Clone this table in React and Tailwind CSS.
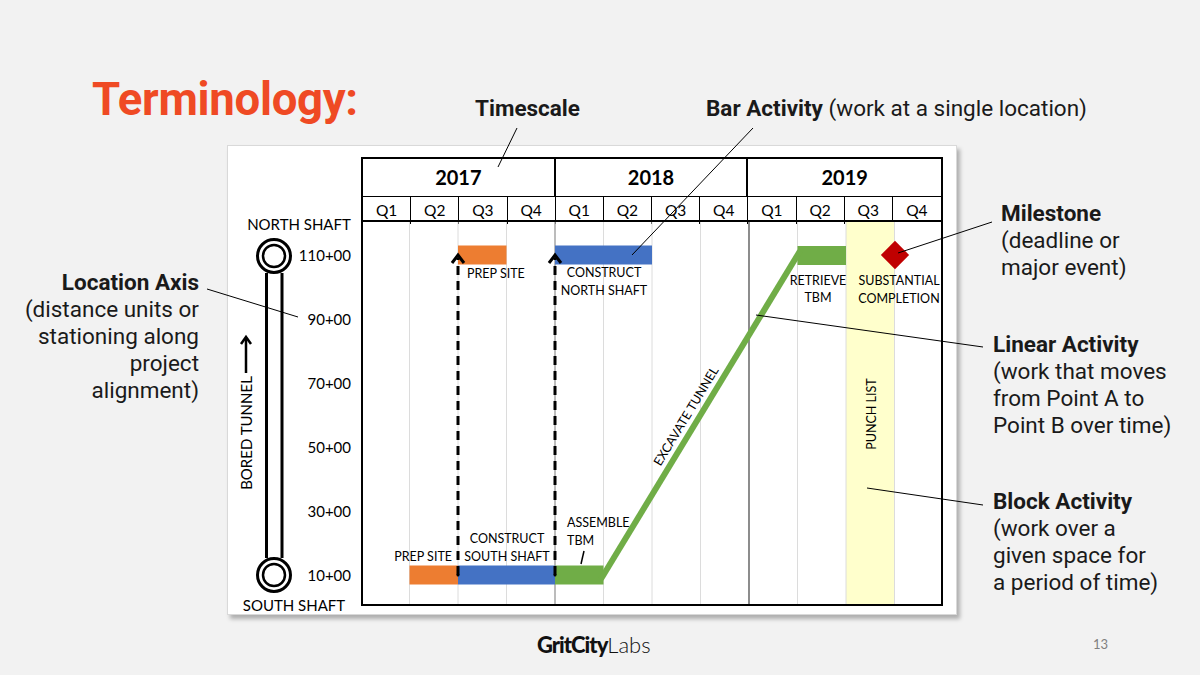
import React from "react"

const Q = 48.5

const years = ["2017", "2018", "2019"]
const quarters = ["Q1", "Q2", "Q3", "Q4", "Q1", "Q2", "Q3", "Q4", "Q1", "Q2", "Q3", "Q4"]
const stations = ["110+00", "90+00", "70+00", "50+00", "30+00", "10+00"]

function LocationAxis() {
  return (
    <svg width="134" height="470" viewBox="0 0 134 470" className="block" fontFamily="Lato, sans-serif">
      {/* shafts + tunnel */}
      <line x1="38.5" y1="127" x2="38.5" y2="412" stroke="#000" strokeWidth="3" />
      <line x1="54" y1="127" x2="54" y2="412" stroke="#000" strokeWidth="3" />
      <circle cx="46" cy="110" r="16.5" fill="#fff" stroke="#000" strokeWidth="3" />
      <circle cx="46" cy="110" r="11" fill="none" stroke="#000" strokeWidth="2.5" />
      <circle cx="46" cy="429" r="16.5" fill="#fff" stroke="#000" strokeWidth="3" />
      <circle cx="46" cy="429" r="11" fill="none" stroke="#000" strokeWidth="2.5" />

      <text x="71" y="78" fontSize="15" textAnchor="middle" dominantBaseline="central">NORTH SHAFT</text>
      <text x="66" y="459" fontSize="15" textAnchor="middle" dominantBaseline="central">SOUTH SHAFT</text>

      {stations.map((s, i) => (
        <text key={s} x="123" y={109 + i * 64} fontSize="15" textAnchor="end" dominantBaseline="central">
          {s}
        </text>
      ))}

      {/* direction arrow */}
      <line x1="18" y1="227" x2="18" y2="192" stroke="#000" strokeWidth="2.5" />
      <polyline points="13,198 18,191 23,198" fill="none" stroke="#000" strokeWidth="2.5" />
      <text
        x="18"
        y="287"
        fontSize="15"
        textAnchor="middle"
        dominantBaseline="central"
        transform="rotate(-90 18 287)"
      >
        BORED TUNNEL
      </text>
    </svg>
  )
}

function DashedArrow({ x }) {
  return (
    <g>
      <line x1={x} y1="353" x2={x} y2="36" stroke="#000" strokeWidth="3" strokeDasharray="9 6" />
      <polyline points={`${x - 6},41 ${x},33 ${x + 6},41`} fill="none" stroke="#000" strokeWidth="3" />
      <circle cx={x} cy="353" r="1.5" fill="#000" />
    </g>
  )
}

function ChartBody() {
  return (
    <svg width="582" height="384" viewBox="0 0 582 384" className="block" fontFamily="Lato, sans-serif" fontSize="12.5">
      {/* block activity */}
      <rect x="485" y="0" width="48.5" height="384" fill="#ffffcc" />

      {[1, 2, 3, 5, 6, 7, 9, 10, 11].map((k) => (
        <line key={k} x1={k * Q} y1="0" x2={k * Q} y2="384" stroke="#dcdcdc" strokeWidth="1" />
      ))}
      <line x1="194" y1="0" x2="194" y2="384" stroke="#a6a6a6" strokeWidth="1.5" />
      <line x1="388" y1="0" x2="388" y2="384" stroke="#404040" strokeWidth="1.2" />
      <polyline points="1,0 1,383 581,383 581,0" fill="none" stroke="#000" strokeWidth="2" />

      {/* bars */}
      <rect x="97" y="23.5" width="48.5" height="19" fill="#ed7d31" />
      <rect x="194" y="23.5" width="97" height="19" fill="#4472c4" />
      <rect x="48.5" y="343.5" width="48.5" height="19" fill="#ed7d31" />
      <rect x="97" y="343.5" width="97" height="19" fill="#4472c4" />
      <rect x="194" y="343.5" width="48.5" height="19" fill="#70ad47" />
      <rect x="436.5" y="24" width="48.5" height="19" fill="#70ad47" />

      {/* linear activity */}
      <line x1="240" y1="357" x2="439" y2="29" stroke="#70ad47" strokeWidth="6" />

      <DashedArrow x={97} />
      <DashedArrow x={194} />

      {/* milestone */}
      <rect x="524" y="23" width="20" height="20" fill="#c00000" transform="rotate(45 534 33)" />

      {/* labels */}
      <text x="106" y="51" dominantBaseline="central">PREP SITE</text>
      <text x="243" y="50" textAnchor="middle" dominantBaseline="central">CONSTRUCT</text>
      <text x="243" y="68" textAnchor="middle" dominantBaseline="central">NORTH SHAFT</text>
      <text x="457" y="58" textAnchor="middle" dominantBaseline="central">RETRIEVE</text>
      <text x="457" y="75" textAnchor="middle" dominantBaseline="central">TBM</text>
      <text x="538" y="58" textAnchor="middle" dominantBaseline="central">SUBSTANTIAL</text>
      <text x="538" y="76" textAnchor="middle" dominantBaseline="central">COMPLETION</text>

      <text x="91" y="334" textAnchor="end" dominantBaseline="central">PREP SITE</text>
      <text x="146" y="316" textAnchor="middle" dominantBaseline="central">CONSTRUCT</text>
      <text x="146" y="334" textAnchor="middle" dominantBaseline="central">SOUTH SHAFT</text>
      <text x="206" y="300" dominantBaseline="central">ASSEMBLE</text>
      <text x="206" y="318" dominantBaseline="central">TBM</text>
      <line x1="223" y1="329" x2="220" y2="342" stroke="#000" strokeWidth="1.5" />

      <text
        x="325"
        y="194"
        textAnchor="middle"
        dominantBaseline="central"
        transform="rotate(-58.8 325 194)"
      >
        EXCAVATE TUNNEL
      </text>
      <text
        x="510"
        y="192"
        textAnchor="middle"
        dominantBaseline="central"
        transform="rotate(-90 510 192)"
      >
        PUNCH LIST
      </text>
    </svg>
  )
}

function Chart() {
  return (
    <div className="w-[582px] font-[Lato,sans-serif] text-black">
      <div className="grid grid-cols-3 h-[40px] border-2 border-b-[1.5px] border-black">
        {years.map((y, i) => (
          <div
            key={y}
            className={i < 2 ? "flex items-center justify-center text-[20px] font-bold border-r-2 border-black" : "flex items-center justify-center text-[20px] font-bold"}
          >
            {y}
          </div>
        ))}
      </div>
      <div className="grid grid-cols-12 h-[25px] border-x-2 border-b-2 border-black">
        {quarters.map((q, i) => (
          <div
            key={i}
            className={i < 11 ? "flex items-center justify-center text-[15.5px] border-r-[1.5px] border-black" : "flex items-center justify-center text-[15.5px]"}
          >
            {q}
          </div>
        ))}
      </div>
      <ChartBody />
    </div>
  )
}

function Note({ title, lines, className }) {
  return (
    <div className={className}>
      <div className="font-bold">{title}</div>
      {lines.map((l) => (
        <div key={l}>{l}</div>
      ))}
    </div>
  )
}

export default function App() {
  return (
    <div className="relative w-[1200px] h-[675px] overflow-hidden bg-[#f2f2f2] font-[Roboto,sans-serif] text-[#1a1a1a]">
      {/* Header */}
      <div className="flex items-start h-[145px] pt-[74px]">
        <h1 className="ml-[92px] w-[383px] text-[45.5px] leading-[52px] font-bold text-[#ef4a24] tracking-[-0.3px]">
          Terminology:
        </h1>
        <div className="mt-[21px] w-[231px] text-[22.5px] leading-[27px] font-bold">Timescale</div>
        <div className="mt-[21px] text-[22.5px] leading-[27px] whitespace-nowrap">
          <span className="font-bold">Bar Activity</span> (work at a single location)
        </div>
      </div>

      {/* Body */}
      <div className="flex h-[470px] text-[22.5px] leading-[27px]">
        <div className="w-[227px] pr-[28px] pt-[124px] text-right whitespace-nowrap">
          <div className="font-bold">Location Axis</div>
          <div>(distance units or</div>
          <div>stationing along</div>
          <div>project</div>
          <div>alignment)</div>
        </div>

        <div className="flex w-[730px] pt-[11px] bg-white border border-[#d9d9d9] shadow-[3px_4px_4px_rgba(0,0,0,0.28)]">
          <div className="-mt-[11px] w-[133px]">
            <LocationAxis />
          </div>
          <Chart />
        </div>

        <div className="flex flex-col whitespace-nowrap">
          <Note className="ml-[44px] mt-[55px]" title="Milestone" lines={["(deadline or", "major event)"]} />
          <Note
            className="ml-[36px] mt-[50px]"
            title="Linear Activity"
            lines={["(work that moves", "from Point A to", "Point B over time)"]}
          />
          <Note
            className="ml-[36px] mt-[49px]"
            title="Block Activity"
            lines={["(work over a", "given space for", "a period of time)"]}
          />
        </div>
      </div>

      {/* Footer */}
      <div className="flex items-center h-[60px]">
        <div className="ml-[537px] w-[126px] text-[22px] leading-none text-[#111] font-[Lato,sans-serif] whitespace-nowrap">
          <span className="font-black tracking-[-1px]">GritCity</span>
          <span className="font-light">Labs</span>
        </div>
        <div className="ml-[430px] text-[13px] text-[#808080] font-[Lato,sans-serif]">13</div>
      </div>

      {/* Callout leader lines */}
      <svg className="absolute inset-0 pointer-events-none" width="1200" height="675" viewBox="0 0 1200 675">
        <g stroke="#000" strokeWidth="1" fill="none">
          <line x1="517" y1="128" x2="498" y2="167" />
          <line x1="753" y1="128" x2="632" y2="255" />
          <line x1="992" y1="222" x2="898" y2="253" />
          <line x1="983" y1="347" x2="756" y2="315" />
          <line x1="983" y1="505" x2="867" y2="488" />
          <line x1="207" y1="289" x2="298" y2="317" />
        </g>
      </svg>
    </div>
  )
}
